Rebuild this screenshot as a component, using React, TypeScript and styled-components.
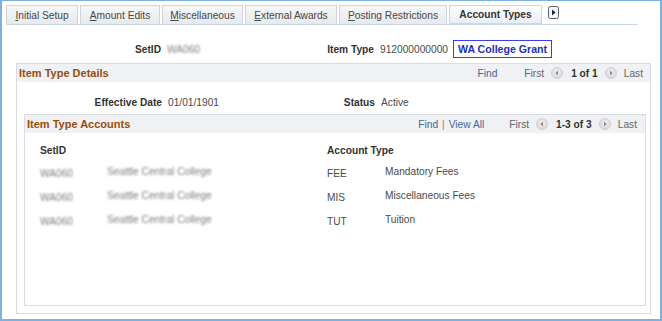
import React from "react";
import styled, { createGlobalStyle, css } from "styled-components";

const Global = createGlobalStyle`
  html, body { margin: 0; padding: 0; background: #fff; }
  body { font-family: "Liberation Sans", Arial, sans-serif; }
`;

const Frame = styled.div`
  width: 662px;
  height: 321px;
  box-sizing: border-box;
  border: 2px solid #7eb1e2;
  border-top-width: 1px;
  padding: 4px 9px 0 4px;
  font-size: 10.2px;
  color: #444;
  overflow: hidden;
`;

const TabStrip = styled.div`
  display: flex;
  align-items: flex-end;
  gap: 2px;
  width: 632px;
  height: 19px;
  border-bottom: 1px solid #c9d7e6;
`;

const Tab = styled.div<{ $w: number; $active?: boolean }>`
  box-sizing: border-box;
  width: ${(p) => p.$w}px;
  height: 19px;
  display: flex;
  align-items: center;
  justify-content: center;
  border: 1px solid #cfd4da;
  border-bottom: none;
  background: linear-gradient(#f6f7f8, #e7e9ec);
  color: #474747;
  font-size: 10.2px;
  ${(p) =>
    p.$active &&
    css`
      background: linear-gradient(#fdfdfe, #eaeff5);
      border-bottom: 2px solid #c7daee;
      color: #333;
      font-weight: bold;
      margin-bottom: -1px;
      height: 20px;
    `}
  u { text-decoration: underline; }
`;

const NextTab = styled.div`
  margin-left: 4px;
  align-self: flex-start;
  margin-top: 1px;
  width: 11px;
  height: 13px;
`;

const FieldGrid = styled.div<{ $lw: number; $mt: number }>`
  display: grid;
  grid-template-columns: ${(p) => p.$lw}px 154px 47px auto;
  column-gap: 6px;
  align-items: center;
  margin-top: ${(p) => p.$mt}px;
  height: 20px;
`;

const Label = styled.div`
  font-weight: bold;
  color: #333;
  text-align: right;
  white-space: nowrap;
`;

const Value = styled.div`
  color: #4a4a4a;
  white-space: nowrap;
  display: flex;
  align-items: center;
  gap: 5px;
`;

const Blur = styled.span`
  filter: blur(1px);
  color: #7d7d7d;
  white-space: nowrap;
`;

const GrantBox = styled.span`
  border: 1px solid #3c3cf0;
  padding: 2px 4px 2px 4px;
  color: #2230b8;
  font-weight: bold;
  font-size: 10.6px;
`;

const Panel = styled.div<{ $ml: number; $mr: number; $mt: number; $pb: number }>`
  margin: ${(p) => p.$mt}px ${(p) => p.$mr}px 0 ${(p) => p.$ml}px;
  border: 1px solid #d9dde2;
  padding-bottom: ${(p) => p.$pb}px;
`;

const PanelHeader = styled.div<{ $pr: number }>`
  display: flex;
  align-items: center;
  height: 18px;
  background: #eff1f4;
  padding: 0 ${(p) => p.$pr}px 0 2px;
`;

const Title = styled.div`
  font-weight: bold;
  font-size: 11px;
  color: #9a4c0b;
  flex: 1;
`;

const Link = styled.span`
  color: #3f6796;
`;

const Sep = styled.span`
  color: #c9702e;
  margin: 0 4px;
`;

const NavText = styled.span<{ $ml: number; $bold?: boolean }>`
  margin-left: ${(p) => p.$ml}px;
  color: ${(p) => (p.$bold ? "#333" : "#666")};
  font-weight: ${(p) => (p.$bold ? "bold" : "normal")};
`;

const NavBtn = styled.span<{ $ml: number }>`
  margin-left: ${(p) => p.$ml}px;
  display: inline-flex;
  width: 12px;
  height: 12px;
`;

const Rows = styled.div`
  display: grid;
  grid-template-columns: 67px 220px 58px auto;
  padding-left: 15px;
  margin-top: 8px;
`;

const HeadCell = styled.div`
  font-weight: bold;
  color: #333;
  height: 18px;
  display: flex;
  align-items: center;
  white-space: nowrap;
`;

const Cell = styled.div<{ $up?: boolean }>`
  height: 24px;
  display: flex;
  align-items: center;
  padding-top: ${(p) => (p.$up ? 0 : 4)}px;
  box-sizing: border-box;
  white-space: nowrap;
  color: #4a4a4a;
`;

const Circle = ({ dir }: { dir: "l" | "r" }) => (
  <svg width="12" height="12" viewBox="0 0 12 12">
    <defs>
      <radialGradient id={"g" + dir} cx="50%" cy="40%" r="60%">
        <stop offset="0" stopColor="#f4f4f4" />
        <stop offset="1" stopColor="#d6d6d6" />
      </radialGradient>
    </defs>
    <circle cx="6" cy="6" r="5.5" fill={`url(#g${dir})`} stroke="#cfcfcf" />
    {dir === "l" ? (
      <path d="M7 3.5 L4.3 6 L7 8.5 Z" fill="#8a8a8a" />
    ) : (
      <path d="M5 3.5 L7.7 6 L5 8.5 Z" fill="#8a8a8a" />
    )}
  </svg>
);

const Nav = ({ count, first }: { count: string; first: number }) => (
  <>
    <NavText $ml={first}>First</NavText>
    <NavBtn $ml={7}>
      <Circle dir="l" />
    </NavBtn>
    <NavText $ml={8} $bold>
      {count}
    </NavText>
    <NavBtn $ml={7}>
      <Circle dir="r" />
    </NavBtn>
    <NavText $ml={7}>Last</NavText>
  </>
);

const tabs: { label: string; key: string; rest: string; w: number }[] = [
  { label: "Initial Setup", key: "I", rest: "nitial Setup", w: 72 },
  { label: "Amount Edits", key: "A", rest: "mount Edits", w: 80 },
  { label: "Miscellaneous", key: "M", rest: "iscellaneous", w: 81 },
  { label: "External Awards", key: "E", rest: "xternal Awards", w: 92 },
  { label: "Posting Restrictions", key: "P", rest: "osting Restrictions", w: 108 },
];

const accounts = [
  { code: "FEE", desc: "Mandatory Fees" },
  { code: "MIS", desc: "Miscellaneous Fees" },
  { code: "TUT", desc: "Tuition" },
];

export default function App() {
  return (
    <>
      <Global />
      <Frame>
        <TabStrip>
          {tabs.map((t) => (
            <Tab key={t.label} $w={t.w}>
              <span>
                <u>{t.key}</u>
                {t.rest}
              </span>
            </Tab>
          ))}
          <Tab $w={93} $active>
            Account Types
          </Tab>
          <NextTab>
            <svg width="11" height="13" viewBox="0 0 11 13">
              <rect x="0.5" y="0.5" width="10" height="12" rx="2" fill="#f3f5f8" stroke="#4f5f7c" />
              <path d="M4 3.5 L7.5 6.5 L4 9.5 Z" fill="#222" />
            </svg>
          </NextTab>
        </TabStrip>

        <FieldGrid $lw={155} $mt={14}>
          <Label>SetID</Label>
          <Value>
            <Blur>WA060</Blur>
          </Value>
          <Label>Item Type</Label>
          <Value>
            912000000000
            <GrantBox>WA College Grant</GrantBox>
          </Value>
        </FieldGrid>

        <Panel $ml={10} $mr={0} $mt={4} $pb={7}>
          <PanelHeader $pr={7}>
            <Title>Item Type Details</Title>
            <Link>Find</Link>
            <Nav count="1 of 1" first={27} />
          </PanelHeader>

          <FieldGrid $lw={145} $mt={10}>
            <Label>Effective Date</Label>
            <Value>01/01/1901</Value>
            <Label>Status</Label>
            <Value>Active</Value>
          </FieldGrid>

          <Panel $ml={7} $mr={4} $mt={2} $pb={74}>
            <PanelHeader $pr={8}>
              <Title>Item Type Accounts</Title>
              <Link>Find</Link>
              <Sep>|</Sep>
              <Link>View All</Link>
              <Nav count="1-3 of 3" first={25} />
            </PanelHeader>
            <Rows>
              <HeadCell>SetID</HeadCell>
              <HeadCell />
              <HeadCell>Account Type</HeadCell>
              <HeadCell />
              {accounts.map((a) => (
                <React.Fragment key={a.code}>
                  <Cell>
                    <Blur>WA060</Blur>
                  </Cell>
                  <Cell $up>
                    <Blur>Seattle Central College</Blur>
                  </Cell>
                  <Cell>{a.code}</Cell>
                  <Cell $up>{a.desc}</Cell>
                </React.Fragment>
              ))}
            </Rows>
          </Panel>
        </Panel>
      </Frame>
    </>
  );
}
